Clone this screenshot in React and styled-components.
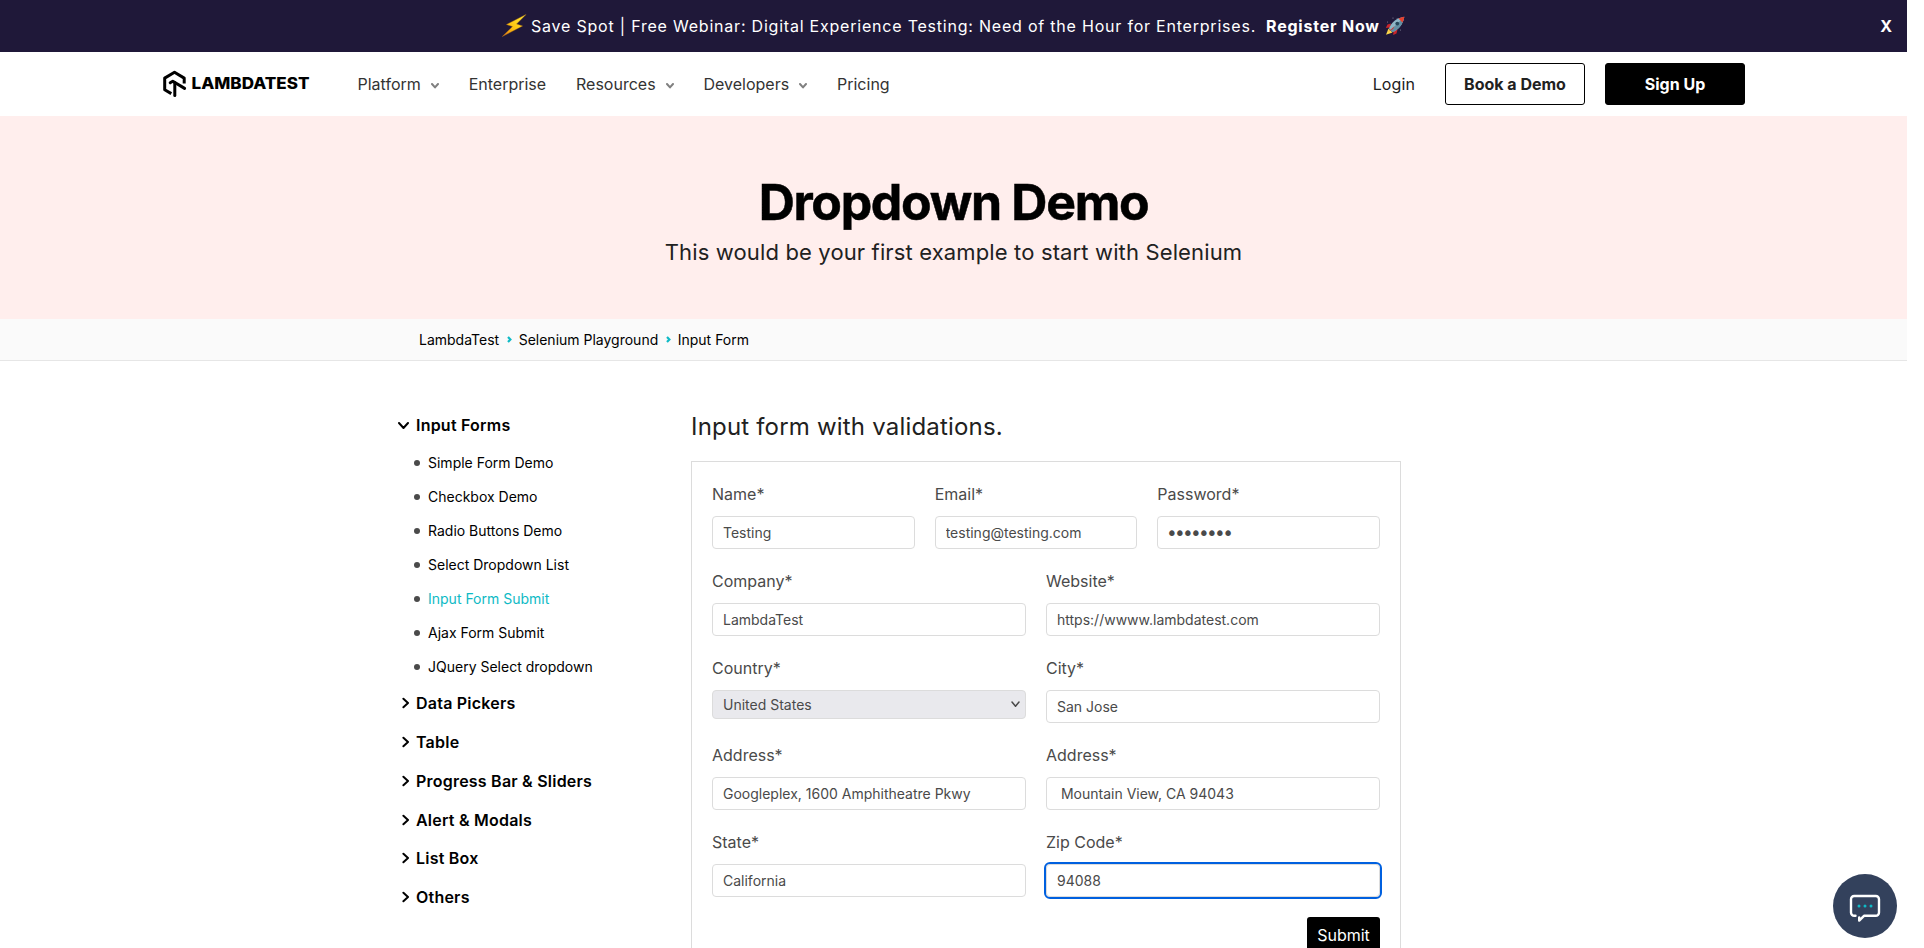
import React from 'react';
import styled, { createGlobalStyle, css } from 'styled-components';

const Global = createGlobalStyle`
  *, *::before, *::after { box-sizing: border-box; }
  html, body { margin: 0; background: #fff; overflow: hidden; }
  body, input, select, button { font-family: Inter, "Liberation Sans", sans-serif; }
`;

const Page = styled.div`
  width: 1907px;
  height: 948px;
  overflow: hidden;
  color: #000;
  font-size: 16px;
`;

const Banner = styled.div`
  height: 52px;
  display: flex;
  align-items: center;
  padding: 0 15px 0 502px;
  background: #1f1839;
  color: #fff;
  letter-spacing: 0.785px;
  white-space: nowrap;
`;
const BannerText = styled.span`
  margin-left: 4px;
`;
const BannerLink = styled.b`
  margin-left: 10px;
  font-weight: 700;
`;
const Close = styled.b`
  margin-left: auto;
  letter-spacing: 0;
`;
const Rocket = styled.svg`
  margin-left: 5px;
`;

const Header = styled.header`
  height: 64px;
  display: flex;
  align-items: center;
  padding: 0 162px 0 163px;
  background: #fff;
  color: #333;
`;
const Logo = styled.div`
  display: flex;
  align-items: center;
  width: 194.5px;
`;
const Nav = styled.nav`
  display: flex;
  align-items: center;
  gap: 29.9px;
`;
const NavItem = styled.a`
  display: flex;
  align-items: center;
  gap: 10px;
  line-height: 24px;
  svg { margin-top: 4px; }
`;
const Actions = styled.div`
  display: flex;
  align-items: center;
  margin-left: auto;
  gap: 20px;
`;
const Login = styled.a`
  margin-right: 10px;
  letter-spacing: 0.1px;
  color: #212121;
`;
const Action = styled.button`
  width: 140px;
  height: 42px;
  padding: 0;
  border: 1px solid #000;
  border-radius: 3px;
  font-size: 16px;
  font-weight: 700;
  background: ${p => (p.$filled ? '#000' : '#fff')};
  color: ${p => (p.$filled ? '#fff' : '#212121')};
`;

const Hero = styled.section`
  height: 203px;
  padding-top: 56px;
  background: #ffeeed;
  text-align: center;
`;
const HeroTitle = styled.h1`
  margin: 0;
  font-size: 50px;
  line-height: 60px;
  font-weight: 700;
  letter-spacing: -1.3px;
  -webkit-text-stroke: 0.5px #000;
`;
const HeroText = styled.p`
  margin: 6px 0 0;
  font-size: 22px;
  line-height: 28px;
  letter-spacing: 0.14px;
  color: #212121;
`;

const Crumbs = styled.div`
  height: 42px;
  display: flex;
  align-items: center;
  padding-left: 419px;
  background: #fafafa;
  border-bottom: 1px solid #e6e6e6;
  font-size: 14px;
`;
const CrumbArrow = styled.svg`
  margin: 0 6.5px 0 8px;
`;

const Content = styled.main`
  display: flex;
`;
const Sidebar = styled.aside`
  width: 691px;
  padding: 45px 0 0 398px;
`;
const Group = styled.div`
  height: 38.8px;
  display: flex;
  align-items: center;
  font-weight: 600;
  letter-spacing: 0.22px;
`;
const GroupIcon = styled.span`
  width: 18px;
  display: flex;
  padding-left: ${p => (p.$open ? 0 : 3.5)}px;
`;
const Items = styled.ul`
  margin: 0;
  padding: 1px 0 0 16px;
  list-style: none;
  font-size: 14px;
`;
const Item = styled.li`
  height: 34px;
  display: flex;
  align-items: center;
  gap: 8px;
  color: ${p => (p.$active ? '#0ebac5' : '#000')};
  &::before {
    content: '';
    width: 6px;
    height: 6px;
    border-radius: 50%;
    background: #4a4a4a;
  }
`;

const Main = styled.section`
  width: 710px;
  padding-top: 50px;
`;
const Title = styled.h2`
  margin: 0 0 18px;
  font-size: 24px;
  line-height: 32px;
  font-weight: 400;
  letter-spacing: 0.19px;
  color: #212121;
`;
const Form = styled.form`
  height: 560px;
  padding: 20px;
  border: 1px solid #dcdcdc;
`;
const Row = styled.div`
  display: grid;
  grid-template-columns: repeat(${p => p.$cols}, 1fr);
  height: 87px;
`;
const Field = styled.div`
  padding-right: 20px;
  &:last-child { padding-right: 0; }
`;
const Label = styled.label`
  display: block;
  margin-bottom: 10px;
  line-height: 24px;
  color: #4a4a4a;
`;
const control = css`
  display: block;
  width: 100%;
  border: 1px solid #dcdcdc;
  border-radius: 4px;
  padding: 0 10px;
  font-size: 14px;
  color: #4a4a4a;
`;
const Input = styled.input`
  ${control}
  height: 33px;
  background: #fff;
  outline: ${p => (p.$focused ? '2px solid #0060df' : 'none')};
  &[type='password'] {
    padding: 0 8px;
    font-family: "DejaVu Sans", sans-serif;
    font-size: 19px;
    letter-spacing: -3.2px;
  }
`;
const Select = styled.div`
  ${control}
  height: 29px;
  display: flex;
  align-items: center;
  justify-content: space-between;
  padding-right: 5px;
  background: #e9e9ed;
`;
const Submit = styled.button`
  display: block;
  width: 73px;
  height: 35px;
  margin-left: auto;
  padding: 0;
  border: 0;
  border-radius: 3px;
  background: #000;
  color: #fff;
  font-size: 16px;
`;

const Chat = styled.button`
  position: absolute;
  left: 1833px;
  top: 874px;
  width: 64px;
  height: 64px;
  border: 0;
  border-radius: 50%;
  padding: 3px 0 0;
  display: flex;
  align-items: center;
  justify-content: center;
  background: #33415c;
`;

const Chevron = ({ w, h, color, sw }) => (
  <svg width={w} height={h} viewBox={`0 0 ${w} ${h}`} fill="none">
    <path d={`M1 1L${w / 2} ${h - 1.2}L${w - 1} 1`} stroke={color} strokeWidth={sw} strokeLinecap="round" strokeLinejoin="round" />
  </svg>
);
const Right = () => (
  <svg width="8" height="12" viewBox="0 0 8 12" fill="none">
    <path d="M1.4 1.7L6 6L1.4 10.3" stroke="#000" strokeWidth="2" strokeLinecap="round" strokeLinejoin="round" />
  </svg>
);

const nav = [
  ['Platform', true],
  ['Enterprise', false],
  ['Resources', true],
  ['Developers', true],
  ['Pricing', false],
];
const items = ['Simple Form Demo', 'Checkbox Demo', 'Radio Buttons Demo', 'Select Dropdown List', 'Input Form Submit', 'Ajax Form Submit', 'JQuery Select dropdown'];
const groups = ['Data Pickers', 'Table', 'Progress Bar & Sliders', 'Alert & Modals', 'List Box', 'Others'];
const rows = [
  [{ label: 'Name*', value: 'Testing' }, { label: 'Email*', value: 'testing@testing.com' }, { label: 'Password*', value: 'password', type: 'password' }],
  [{ label: 'Company*', value: 'LambdaTest' }, { label: 'Website*', value: 'https://wwww.lambdatest.com' }],
  [{ label: 'Country*', value: 'United States', type: 'select' }, { label: 'City*', value: 'San Jose' }],
  [{ label: 'Address*', value: 'Googleplex, 1600 Amphitheatre Pkwy' }, { label: 'Address*', value: ' Mountain View, CA 94043' }],
  [{ label: 'State*', value: 'California' }, { label: 'Zip Code*', value: '94088', focused: true }],
];

const Arrow = () => (
  <CrumbArrow width="5" height="7" viewBox="0 0 5 7" fill="none">
    <path d="M1 1L3.4 3.5L1 6" stroke="#0ebac5" strokeWidth="2.2" />
  </CrumbArrow>
);

export default function App() {
  return (
    <>
      <Global />
      <Page>
        <Banner>
          <svg width="25" height="24" viewBox="0 0 25 24">
            <defs>
              <linearGradient id="bolt" x1="1" y1="0" x2="0" y2="1">
                <stop offset="0" stopColor="#fff33b" />
                <stop offset=".6" stopColor="#fdc00f" />
                <stop offset="1" stopColor="#e0701a" />
              </linearGradient>
            </defs>
            <path d="M24 .5L4.5 10.5L10.5 12.5L.3 22.5L20.5 12L14.5 10Z" fill="url(#bolt)" stroke="#c07a10" strokeWidth=".4" />
          </svg>
          <BannerText>Save Spot | Free Webinar: Digital Experience Testing: Need of the Hour for Enterprises.</BannerText>
          <BannerLink>Register Now</BannerLink>
          <Rocket width="20" height="20" viewBox="0 0 20 20">
            <path d="M6 7.5L2.5 8.5L.8 12L5 11.5ZM12.5 13.5L11.5 17.5L8.2 19L8.5 15Z" fill="#c9252b" />
            <path d="M3.5 12.5L1 18.8L7.5 16.5Z" fill="#fbd84b" />
            <path d="M4 12.5C6 7 11 2 19.3.7C18 9 13 14 7.5 16Z" fill="#8fb6c6" />
            <path d="M7.5 16C13 14 18 9 19.3.7L5.5 14.2Z" fill="#648fa3" />
            <path d="M13.5 2.6C15.3 1.6 17 1 19.3.7C19 3 18.4 4.7 17.4 6.5Z" fill="#e5402f" />
            <circle cx="12.3" cy="7.6" r="1.9" fill="#26475a" />
            <path d="M9.5 10.3L3.2 15.8L8 13Z" fill="#d9302b" />
            <circle cx="8" cy="2" r=".6" fill="#8b8ba0" /><circle cx="2.5" cy="6" r=".5" fill="#8b8ba0" /><circle cx="15.5" cy="14" r=".5" fill="#8b8ba0" />
          </Rocket>
          <Close>X</Close>
        </Banner>

        <Header>
          <Logo>
            <svg width="147" height="28" viewBox="0 0 147 28">
              <path d="M8.3 23.6L1.7 19.7V8.1L11.5 2.3L21.2 8.1V13.6" fill="none" stroke="#000" strokeWidth="3" strokeLinejoin="round" />
              <path d="M7.2 12.8L9.8 11.2L21.6 18.4" fill="none" stroke="#000" strokeWidth="3" strokeLinejoin="round" strokeLinecap="round" />
              <path d="M11.8 12.6V25.6" stroke="#000" strokeWidth="3" strokeLinecap="round" />
              <text x="28.5" y="19" fontFamily="Inter" fontSize="16.2" fontWeight="800" textLength="118" lengthAdjust="spacingAndGlyphs">LAMBDATEST</text>
            </svg>
          </Logo>
          <Nav>
            {nav.map(([t, c]) => (
              <NavItem key={t}>{t}{c && <Chevron w={8} h={5.6} color="#808080" sw={2} />}</NavItem>
            ))}
          </Nav>
          <Actions>
            <Login>Login</Login>
            <Action>Book a Demo</Action>
            <Action $filled>Sign Up</Action>
          </Actions>
        </Header>

        <Hero>
          <HeroTitle>Dropdown Demo</HeroTitle>
          <HeroText>This would be your first example to start with Selenium</HeroText>
        </Hero>
        <Crumbs>
          <span>LambdaTest</span><Arrow /><span>Selenium Playground</span><Arrow /><span>Input Form</span>
        </Crumbs>

        <Content>
          <Sidebar>
            <Group><GroupIcon $open><Chevron w={11} h={7.2} color="#000" sw={2} /></GroupIcon>Input Forms</Group>
            <Items>{items.map(t => <Item key={t} $active={t === 'Input Form Submit'}>{t}</Item>)}</Items>
            {groups.map(t => <Group key={t}><GroupIcon><Right /></GroupIcon>{t}</Group>)}
          </Sidebar>
          <Main>
            <Title>Input form with validations.</Title>
            <Form>
              {rows.map((row, i) => (
                <Row key={i} $cols={row.length}>
                  {row.map((f, j) => (
                    <Field key={j}>
                      <Label>{f.label}</Label>
                      {f.type === 'select'
                        ? <Select>{f.value}<Chevron w={9} h={6.5} color="#4a4a4a" sw={1.5} /></Select>
                        : <Input type={f.type || 'text'} defaultValue={f.value} $focused={f.focused} />}
                    </Field>
                  ))}
                </Row>
              ))}
              <Submit type="button">Submit</Submit>
            </Form>
          </Main>
        </Content>
        <Chat aria-label="Chat">
          <svg width="32" height="30" viewBox="0 0 32 30" fill="none">
            <path d="M6.5 22.8H5.2A3.2 3.2 0 0 1 2 19.6V6.2A3.2 3.2 0 0 1 5.2 3H26.8A3.2 3.2 0 0 1 30 6.2V19.6A3.2 3.2 0 0 1 26.8 22.8H15L10.2 27.6V24.5" stroke="#fff" strokeWidth="2.4" strokeLinecap="round" strokeLinejoin="round" />
            <circle cx="10" cy="13" r="1.5" fill="#0ebac5" /><circle cx="16" cy="13" r="1.5" fill="#0ebac5" /><circle cx="22" cy="13" r="1.5" fill="#0ebac5" />
          </svg>
        </Chat>
      </Page>
    </>
  );
}
